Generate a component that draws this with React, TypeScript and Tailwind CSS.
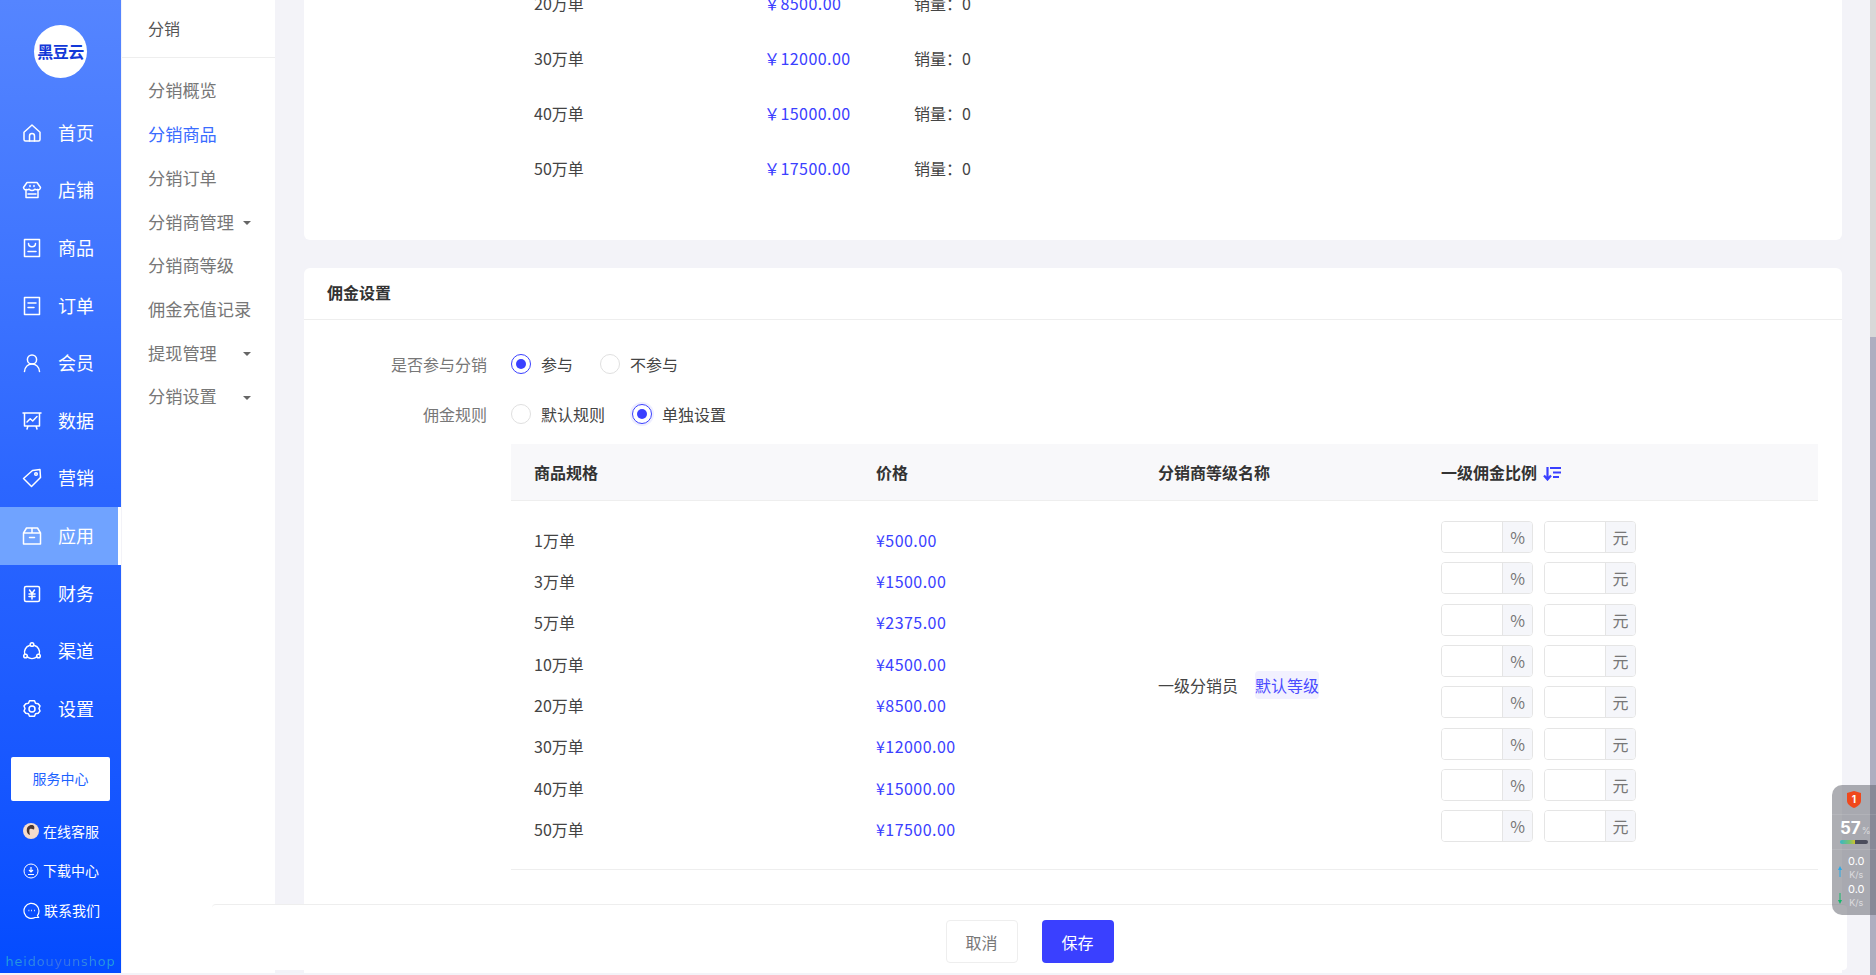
import React from "react";

const font = { fontFamily: '"Noto Sans CJK SC", "Noto Sans", sans-serif' };

const S = ({ children }: { children: React.ReactNode }) => (
  <svg viewBox="0 0 20 20" width="20" height="20" fill="none" stroke="currentColor" strokeWidth="1.5" strokeLinecap="round" strokeLinejoin="round" className="text-white shrink-0">
    {children}
  </svg>
);

const icons: Record<string, React.ReactNode> = {
  home: <><path d="M2 9.2 10 2l8 7.2v7.3a1.5 1.5 0 0 1-1.5 1.5h-13A1.5 1.5 0 0 1 2 16.5z" /><path d="M7.5 18v-5a2.5 2.5 0 0 1 5 0v5" /></>,
  store: <><path d="M5 2.5h10l3.5 5a2.2 2.2 0 0 1-3 2 2.6 2.6 0 0 1-2.7-.3 3.6 3.6 0 0 1-5.6 0 2.6 2.6 0 0 1-2.7.3 2.2 2.2 0 0 1-3-2z" /><path d="M4 10v7.5h12V10M6 14h8M8 5.5v1M12 5.5v1" /></>,
  goods: <><rect x="2.5" y="1.5" width="15" height="17" /><path d="M6.5 5.5c0 4.2 7 4.2 7 0M6 13.5h8" /></>,
  order: <><rect x="2.5" y="1.5" width="15" height="17" /><path d="M6 7h8M6 11.5h6" /></>,
  user: <><circle cx="10" cy="6.5" r="4.6" /><path d="M2.5 18.5c.5-4.5 3.5-7.4 7.5-7.4s7 2.9 7.500 7.400" /></>,
  data: <><path d="M1 2h18M2.500 2v13h15V2M6 15l-1 3M14 15l1 3" /><path d="m5 11 3.200-3.200 2.500 2.200L15 5.500" /></>,
  tag: <><path d="M10.500 2.500 18 1.500l.5 8L9.500 18.500 1.500 10.500z" /><circle cx="14" cy="6" r="1.300" /></>,
  app: <><path d="M1.500 7 4.500 2h11l3 5v11h-17zM1.500 7h17M10 2v5M7.500 11.500h5" /></>,
  finance: <><rect x="2.500" y="2.500" width="15" height="15" rx="1.500" /><path d="m7.500 6 2.500 3.500L12.500 6M7 10h6M7 12.500h6M10 9.500V15" /></>,
  channel: <><circle cx="10" cy="3.500" r="1.800" /><circle cx="3.500" cy="15" r="1.800" /><circle cx="16.500" cy="15" r="1.800" /><path d="M7.500 4.500a7 7 0 0 0-4.800 8.500M12.500 4.500a7 7 0 0 1 4.800 8.500M5.300 15.800a7.500 7.500 0 0 0 9.400 0" /></>,
  settings: <><path d="M7.500 1.800h5l1 2.500 2.700.4 1.800 2.300-1 2.500 1 2.500-1.800 2.300-2.700.4-1 2.500h-5l-1-2.500-2.700-.4-1.800-2.300 1-2.500-1-2.500 1.800-2.300 2.700-.4z" /><circle cx="10" cy="10" r="3" /></>,
};

const nav = [
  ["home", "首页"], ["store", "店铺"], ["goods", "商品"], ["order", "订单"], ["user", "会员"], ["data", "数据"],
  ["tag", "营销"], ["app", "应用"], ["finance", "财务"], ["channel", "渠道"], ["settings", "设置"],
];

const subMenu: [string, boolean, boolean][] = [
  ["分销概览", false, false], ["分销商品", true, false], ["分销订单", false, false], ["分销商管理", false, true],
  ["分销商等级", false, false], ["佣金充值记录", false, false], ["提现管理", false, true], ["分销设置", false, true],
];

const topRows = [["20万单", "￥8500.00"], ["30万单", "￥12000.00"], ["40万单", "￥15000.00"], ["50万单", "￥17500.00"]];
const specs = [["1万单", "¥500.00"], ["3万单", "¥1500.00"], ["5万单", "¥2375.00"], ["10万单", "¥4500.00"], ["20万单", "¥8500.00"], ["30万单", "¥12000.00"], ["40万单", "¥15000.00"], ["50万单", "¥17500.00"]];

function Sidebar() {
  return (
    <aside className="w-[121px] h-[973px] shrink-0 flex flex-col items-stretch bg-gradient-to-b from-[#5585ff] via-[#2c66ff] to-[#034bff] text-white">
      <div className="h-[104px] flex items-start justify-center pt-[25px]">
        <div className="w-[53px] h-[53px] pb-[2px] rounded-full bg-white flex items-center justify-center text-[16px] font-semibold text-[#1239d8] tracking-[-0.5px] leading-none">黑豆云</div>
      </div>
      <nav className="flex flex-col">
        {nav.map(([k, t]) => (
          <div key={k} className={`h-[57.6px] flex items-center pl-[22px] gap-[16px] text-[18px] ${t === "应用" ? "bg-[#70a3ff] border-r-[3px] border-white" : ""}`}>
            <S>{icons[k]}</S>
            <span className="-mt-[1px]">{t}</span>
          </div>
        ))}
      </nav>
      <div className="mx-[11px] mt-[19px] h-[44px] bg-white rounded-[2px] flex items-center justify-center text-[14px] text-[#1c62ff]">服务中心</div>
      <div className="mt-[11px] flex flex-col text-[14px] pl-[23px]">
        <div className="h-[39px] flex items-center gap-[4px]">
          <svg viewBox="0 0 16 16" width="16" height="16" className="shrink-0">
            <circle cx="8" cy="8" r="8" fill="#f6dccb" />
            <path d="M4 9c-1-5 2-7 4.500-7S12 4 11 6.500C9 6.500 7 5 6.500 6.500 6 8 6.500 10 7 12 5.500 11.500 4.500 10.500 4 9z" fill="#4a3733" />
          </svg>
          <span>在线客服</span>
        </div>
        <div className="h-[40px] flex items-center gap-[4px]">
          <svg viewBox="0 0 16 16" width="16" height="16" fill="none" stroke="white" strokeWidth="1" className="shrink-0">
            <circle cx="8" cy="8" r="7" /><path d="M8 4v5M6 7l2 2 2-2M5 11.500h6" strokeWidth="1.200" />
          </svg>
          <span>下载中心</span>
        </div>
        <div className="h-[40px] flex items-center gap-[4px]">
          <svg viewBox="0 0 17 17" width="17" height="17" fill="none" stroke="white" strokeWidth="1.200" className="shrink-0">
            <path d="M12 15.500A7.500 7.500 0 1 1 16 9c0 2-.5 3.500-1.500 4.500l1 2z" /><path d="M5.500 8.500h.8M8.200 8.500H9M11 8.500h.8" strokeWidth="1.500" />
          </svg>
          <span>联系我们</span>
        </div>
      </div>
      <div className="mt-auto mb-[2px] text-center text-[13px] leading-[18px] tracking-[0.8px] text-transparent bg-clip-text bg-gradient-to-r from-[#1ba6d8] via-[#3a6ee8] to-[#1ba6d8]" style={{ fontFamily: '"DejaVu Sans", sans-serif' }}>heidouyunshop</div>
    </aside>
  );
}

function SubNav() {
  return (
    <div className="w-[153px] h-[973px] shrink-0 ml-px bg-white flex flex-col">
      <div className="h-[58px] pl-[26px] pb-[2px] flex items-center border-b border-[#eeeeee] text-[16px] text-[#555555]">分销</div>
      <div className="pt-[10.500px] flex flex-col">
        {subMenu.map(([t, active, caret]) => (
          <div key={t} className={`h-[43.700px] pl-[26px] pr-[24px] flex items-center justify-between text-[17.200px] whitespace-nowrap ${active ? "text-[#3a6cff]" : "text-[#777777]"}`}>
            <span>{t}</span>
            {caret && <span className="w-0 h-0 border-x-[4px] border-x-transparent border-t-[4px] border-t-[#666666] mt-[3px]" />}
          </div>
        ))}
      </div>
    </div>
  );
}

function Radio({ checked, ring, label }: { checked?: boolean; ring?: boolean; label: string }) {
  return (
    <div className="flex items-center gap-[10px]">
      <span className={`w-[20px] h-[20px] rounded-full border flex items-center justify-center ${checked ? "border-[#3a40ff]" : "border-[#e0e0e0]"} ${ring ? "shadow-[0_0_0_2px_#eeeeff]" : ""}`}>
        {checked && <span className="w-[10px] h-[10px] rounded-full bg-[#3a40ff]" />}
      </span>
      <span className="text-[#444444]">{label}</span>
    </div>
  );
}

function Addon({ unit }: { unit: string }) {
  return (
    <div className="w-[92px] h-[32px] flex border border-[#e5e5e5] rounded-[4px] overflow-hidden">
      <div className="flex-1 bg-white" />
      <div className="w-[30px] bg-[#f5f6fa] border-l border-[#e5e5e5] flex items-center justify-center text-[#777777] text-[16px]">{unit}</div>
    </div>
  );
}

function Main() {
  return (
    <main className="flex-1 min-w-0 h-[973px] overflow-hidden pl-[29px] pr-[28px]">
      <section className="-mt-[25px] h-[265px] bg-white rounded-[6px] pl-[230px]">
        {topRows.map(([a, b]) => (
          <div key={a} className="h-[55px] flex items-center text-[16px]">
            <span className="w-[230px] text-[#444444]">{a}</span>
            <span className="w-[150px] text-[#3a40ff] tracking-[0.45px]">{b}</span>
            <span className="text-[#444444]">销量：0</span>
          </div>
        ))}
      </section>
      <section className="mt-[28px] bg-white rounded-[6px] h-[720px]">
        <div className="h-[52px] pl-[23px] pb-[3px] flex items-center border-b border-[#eeeeee] text-[16px] font-bold text-[#333333]">佣金设置</div>
        <div className="flex h-[40px] mt-[24px] items-center text-[16px]">
          <span className="w-[183px] text-right text-[#777777]">是否参与分销</span>
          <div className="ml-[24px] flex gap-[27px]"><Radio checked label="参与" /><Radio label="不参与" /></div>
        </div>
        <div className="flex h-[40px] mt-[10px] items-center text-[16px]">
          <span className="w-[183px] text-right text-[#777777]">佣金规则</span>
          <div className="ml-[24px] flex gap-[27px]"><Radio label="默认规则" /><Radio checked ring label="单独设置" /></div>
        </div>
        <div className="ml-[207px] mr-[24px] mt-[10px] text-[16px] text-[#444444]">
          <div className="h-[57px] bg-[#f8f8fa] border-b border-[#eeeeee] grid grid-cols-[342px_282px_282px_1fr] items-center font-bold text-[#333333]">
            <span className="pl-[23px]">商品规格</span>
            <span className="pl-[23px]">价格</span>
            <span className="pl-[23px]">分销商等级名称</span>
            <span className="pl-[24px] flex items-center gap-[6px]">
              一级佣金比例
              <svg viewBox="0 0 18 15" width="18" height="15" fill="none" stroke="#3a40ff" strokeWidth="2.200" className="mt-[3px]">
                <path d="M4.500 1v12M1 9.500l3.500 4 3.500-4M7 2h11M10 6.500h8M10 11h6" />
              </svg>
            </span>
          </div>
          <div className="grid grid-cols-[342px_282px_282px_1fr] pt-[20px] pb-[17px] border-b border-[#eeeeee]">
            <div className="flex flex-col pl-[23px] -mt-[2px]">
              {specs.map(([a]) => <div key={a} className="h-[41.330px] flex items-center">{a}</div>)}
            </div>
            <div className="flex flex-col pl-[23px] -mt-[2px] text-[#3a40ff] tracking-[0.45px]">
              {specs.map(([a, b]) => <div key={a} className="h-[41.330px] flex items-center">{b}</div>)}
            </div>
            <div className="flex items-center pl-[23px] -mt-[2px]">
              <span>一级分销员</span>
              <span className="ml-[17px] h-[28px] flex items-center rounded-[4px] bg-[#f2f1ff] text-[#4a4aff]">默认等级</span>
            </div>
            <div className="flex flex-col pl-[24px]">
              {specs.map(([a]) => (
                <div key={a} className="h-[41.330px] flex items-start gap-[11px]">
                  <Addon unit="%" />
                  <Addon unit="元" />
                </div>
              ))}
            </div>
          </div>
        </div>
      </section>
    </main>
  );
}

function Widget() {
  return (
    <div className="absolute left-[1832px] top-[785px] w-[44px] h-[130px] rounded-l-[10px] bg-[#6a6c75]/55 flex flex-col items-stretch text-white" style={{ fontFamily: '"Inter", sans-serif' }}>
      <div className="h-[30px] pr-[1px] flex items-center justify-center border-b border-white/10">
        <svg viewBox="0 0 14 17" width="14" height="17">
          <path d="M7 0 14 2v8c0 3-3.500 5.500-7 7-3.500-1.500-7-4-7-7V2z" fill="#f0481c" />
          <text x="7" y="12" textAnchor="middle" fontSize="10" fontWeight="700" fill="white">1</text>
        </svg>
      </div>
      <div className="h-[35px] pl-[8px] border-b border-white/10 pt-[4px]">
        <div className="flex items-baseline gap-[1px] leading-[18px]">
          <span className="text-[17px] font-bold">57</span><span className="text-[9px] text-white/60">%</span>
        </div>
        <div className="w-[28px] h-[4px] rounded-full bg-[linear-gradient(90deg,#38b6c8_0%,#7cc36e_35%,#c9c232_52%,#4b4d5c_53%,#4b4d5c_100%)]" />
      </div>
      <div className="flex flex-col pl-[6px] pt-[5px]">
        <div className="flex items-center gap-[6px]">
          <svg viewBox="0 0 4 12" width="4" height="12" className="mt-[6px]"><path d="M2 1 4 5H2.500v7h-1V5H0z" fill="#28a8e8" /></svg>
          <div className="flex flex-col items-center leading-[13px] text-[11px]"><span>0.0</span><span className="text-[9px] text-white/60">K/s</span></div>
        </div>
        <div className="flex items-center gap-[6px] mt-[2px]">
          <svg viewBox="0 0 4 12" width="4" height="12" className="mt-[6px]"><path d="M2 11 4 7H2.500V0h-1v7H0z" fill="#12b76a" /></svg>
          <div className="flex flex-col items-center leading-[13px] text-[11px]"><span>0.0</span><span className="text-[9px] text-white/60">K/s</span></div>
        </div>
      </div>
    </div>
  );
}

export default function App() {
  return (
    <div className="relative w-full h-[975px] overflow-hidden bg-[#f3f3f8] flex" style={font}>
      <Sidebar />
      <SubNav />
      <Main />
      <div className="w-[6px] h-[975px] shrink-0 bg-[#d8d8d8] flex flex-col">
        <div className="mt-[337px] flex-1 bg-[#aeaec0]" />
      </div>
      <div className="absolute left-[212px] top-[904px] w-[1635px] h-[66px] bg-white border-t border-[#eeeeee] rounded-[4px] flex items-start justify-center gap-[24px] pt-[15px] text-[16px]">
        <button className="w-[72px] h-[43px] bg-white border border-[#eeeeee] rounded-[4px] text-[#777777]">取消</button>
        <button className="w-[72px] h-[43px] bg-[#3a40ff] rounded-[4px] text-white">保存</button>
      </div>
      <Widget />
    </div>
  );
}
